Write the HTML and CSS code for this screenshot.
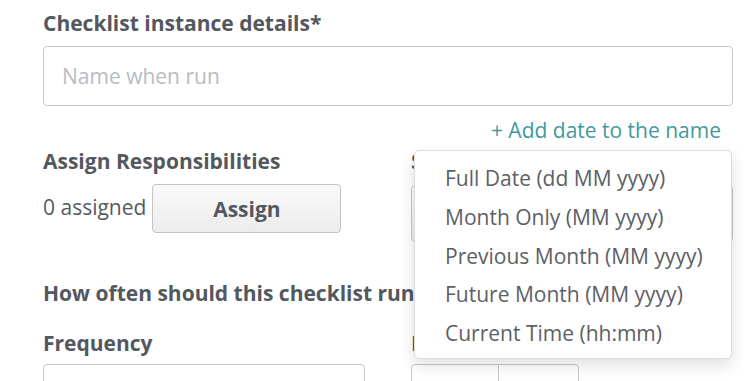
FILE: index.html
```html
<!DOCTYPE html>
<html>
<head>
<meta charset="utf-8">
<link rel="stylesheet" href="styles.css">
</head>
<body>
<div class="page">
  <div class="label">Checklist instance details*</div>
  <div class="name-input">Name when run</div>
  <div class="link-row"><span class="add-link">+ Add date to the name</span></div>

  <div class="cols row-assign">
    <div class="col">
      <div class="label">Assign Responsibilities</div>
      <div class="assign-line">
        <span class="count">0 assigned</span>
        <span class="btn">Assign</span>
      </div>
    </div>
    <div class="col">
      <div class="label">Start</div>
      <div class="select-box"></div>
    </div>
  </div>

  <div class="label how">How often should this checklist run?</div>

  <div class="cols row-freq">
    <div class="col">
      <div class="label">Frequency</div>
      <div class="freq-box"></div>
    </div>
    <div class="col">
      <div class="label">Interval</div>
      <div class="split-box"><span class="seg"></span><span class="seg"></span></div>
    </div>
  </div>

  <ul class="menu">
    <li>Full Date (dd MM yyyy)</li>
    <li>Month Only (MM yyyy)</li>
    <li>Previous Month (MM yyyy)</li>
    <li>Future Month (MM yyyy)</li>
    <li>Current Time (hh:mm)</li>
  </ul>
</div>
</body>
</html>
```

FILE: styles.css
```css
html, body {
  margin: 0;
  padding: 0;
  background: #fff;
}
body {
  font-family: "Open Sans", "DejaVu Sans", sans-serif;
  color: #555a60;
  width: 750px;
  height: 381px;
  overflow: hidden;
}
.page {
  position: relative;
  padding: 9px 17px 0 43px;
}
.label {
  font-weight: 700;
  font-size: 21px;
  line-height: 28px;
  color: #53585e;
  white-space: nowrap;
}
.name-input {
  margin-top: 9px;
  height: 60px;
  border: 1px solid #c8c8c8;
  border-radius: 4px;
  box-sizing: border-box;
  padding-left: 18px;
  display: flex;
  align-items: center;
  font-size: 21px;
  color: #b9bcc0;
}
.link-row {
  display: flex;
  justify-content: flex-end;
  padding-right: 12px;
  margin-top: 10px;
  line-height: 28px;
}
.add-link {
  font-size: 21px;
  color: #3f9a9c;
}
.cols {
  display: grid;
  grid-template-columns: 322px 322px;
  column-gap: 46px;
}
.row-assign {
  margin-top: 3px;
}
.assign-line {
  display: flex;
  align-items: center;
  margin-top: 9px;
  gap: 6px;
}
.count {
  font-size: 21px;
  line-height: 28px;
  color: #555a60;
  margin-top: -3px;
}
.btn {
  width: 189px;
  height: 49px;
  box-sizing: border-box;
  border: 1px solid #c4c4c4;
  border-radius: 4px;
  background: linear-gradient(#fafafa, #ececec);
  display: flex;
  align-items: center;
  justify-content: center;
  font-weight: 700;
  font-size: 21px;
  color: #53585e;
}
.select-box {
  margin-top: 10px;
  height: 57px;
  box-sizing: border-box;
  border: 1px solid #c8c8c8;
  border-radius: 4px;
  background: linear-gradient(#fdfdfd, #eeeeee);
}
.how {
  margin-top: 37px;
}
.row-freq {
  margin-top: 22px;
}
.freq-box {
  margin-top: 7px;
  height: 40px;
  box-sizing: border-box;
  border: 1px solid #c8c8c8;
  border-radius: 4px;
}
.split-box {
  margin-top: 7px;
  width: 168px;
  height: 40px;
  box-sizing: border-box;
  border: 1px solid #c8c8c8;
  border-radius: 4px;
  display: flex;
}
.seg {
  width: 86px;
  border-right: 1px solid #c8c8c8;
}
.seg + .seg {
  border-right: none;
  flex: 1;
}
.menu {
  position: absolute;
  left: 414px;
  top: 150px;
  width: 318px;
  height: 209px;
  box-sizing: border-box;
  margin: 0;
  padding: 8px 0 0 0;
  list-style: none;
  background: #fff;
  border: 1px solid #dcdcdc;
  border-radius: 5px;
  box-shadow: 0 6px 16px rgba(0, 0, 0, 0.13);
}
.menu li {
  font-size: 21px;
  line-height: 38.75px;
  padding-left: 30px;
  color: #5c6066;
  white-space: nowrap;
}
```
